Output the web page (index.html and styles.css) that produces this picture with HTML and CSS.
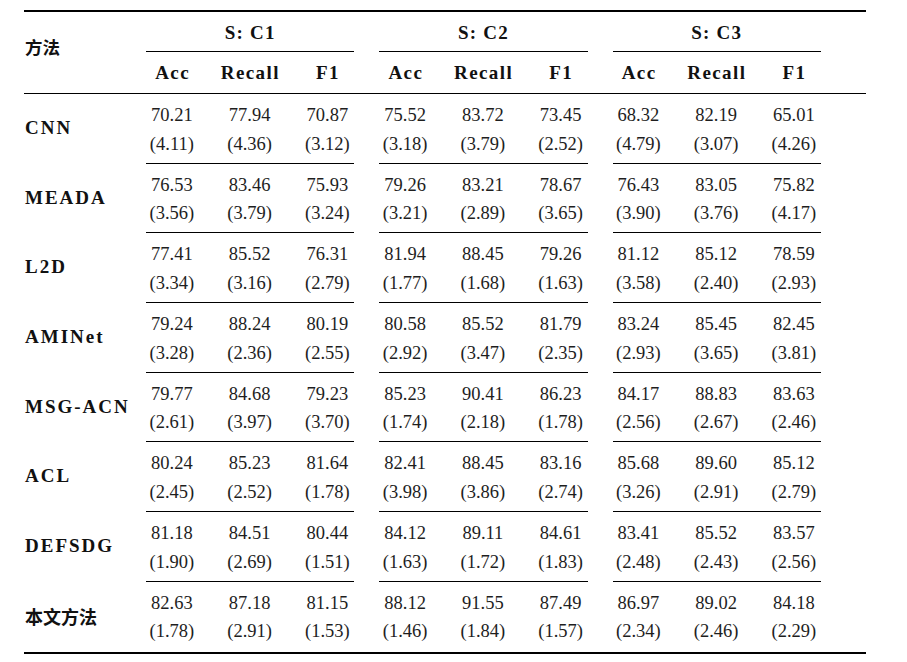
FILE: index.html
```html
<!DOCTYPE html>
<html lang="zh">
<head>
<meta charset="utf-8">
<title>方法对比表</title>
<link rel="stylesheet" href="styles.css">
</head>
<body>
<div class="tbl">
  <div class="rule thick"></div>
  <div class="head">
    <div class="method-head">方法</div>
    <div class="group g1">S: C1</div>
    <div class="group g2">S: C2</div>
    <div class="group g3">S: C3</div>
    <span class="seg g1"></span>
    <span class="seg g2"></span>
    <span class="seg g3"></span>
    <div class="sub">Acc</div><div class="sub">Recall</div><div class="sub">F1</div>
    <div class="sub">Acc</div><div class="sub">Recall</div><div class="sub">F1</div>
    <div class="sub">Acc</div><div class="sub">Recall</div><div class="sub">F1</div>
  </div>
  <div class="rule thin"></div>

  <div class="row">
    <div class="name">CNN</div>
    <div class="val"><span>70.21</span><span>(4.11)</span></div>
    <div class="val"><span>77.94</span><span>(4.36)</span></div>
    <div class="val"><span>70.87</span><span>(3.12)</span></div>
    <div class="val"><span>75.52</span><span>(3.18)</span></div>
    <div class="val"><span>83.72</span><span>(3.79)</span></div>
    <div class="val"><span>73.45</span><span>(2.52)</span></div>
    <div class="val"><span>68.32</span><span>(4.79)</span></div>
    <div class="val"><span>82.19</span><span>(3.07)</span></div>
    <div class="val"><span>65.01</span><span>(4.26)</span></div>
  </div>
  <div class="cmid"><span class="seg g1"></span><span class="seg g2"></span><span class="seg g3"></span></div>

  <div class="row">
    <div class="name">MEADA</div>
    <div class="val"><span>76.53</span><span>(3.56)</span></div>
    <div class="val"><span>83.46</span><span>(3.79)</span></div>
    <div class="val"><span>75.93</span><span>(3.24)</span></div>
    <div class="val"><span>79.26</span><span>(3.21)</span></div>
    <div class="val"><span>83.21</span><span>(2.89)</span></div>
    <div class="val"><span>78.67</span><span>(3.65)</span></div>
    <div class="val"><span>76.43</span><span>(3.90)</span></div>
    <div class="val"><span>83.05</span><span>(3.76)</span></div>
    <div class="val"><span>75.82</span><span>(4.17)</span></div>
  </div>
  <div class="cmid"><span class="seg g1"></span><span class="seg g2"></span><span class="seg g3"></span></div>

  <div class="row">
    <div class="name">L2D</div>
    <div class="val"><span>77.41</span><span>(3.34)</span></div>
    <div class="val"><span>85.52</span><span>(3.16)</span></div>
    <div class="val"><span>76.31</span><span>(2.79)</span></div>
    <div class="val"><span>81.94</span><span>(1.77)</span></div>
    <div class="val"><span>88.45</span><span>(1.68)</span></div>
    <div class="val"><span>79.26</span><span>(1.63)</span></div>
    <div class="val"><span>81.12</span><span>(3.58)</span></div>
    <div class="val"><span>85.12</span><span>(2.40)</span></div>
    <div class="val"><span>78.59</span><span>(2.93)</span></div>
  </div>
  <div class="cmid"><span class="seg g1"></span><span class="seg g2"></span><span class="seg g3"></span></div>

  <div class="row">
    <div class="name">AMINet</div>
    <div class="val"><span>79.24</span><span>(3.28)</span></div>
    <div class="val"><span>88.24</span><span>(2.36)</span></div>
    <div class="val"><span>80.19</span><span>(2.55)</span></div>
    <div class="val"><span>80.58</span><span>(2.92)</span></div>
    <div class="val"><span>85.52</span><span>(3.47)</span></div>
    <div class="val"><span>81.79</span><span>(2.35)</span></div>
    <div class="val"><span>83.24</span><span>(2.93)</span></div>
    <div class="val"><span>85.45</span><span>(3.65)</span></div>
    <div class="val"><span>82.45</span><span>(3.81)</span></div>
  </div>
  <div class="cmid"><span class="seg g1"></span><span class="seg g2"></span><span class="seg g3"></span></div>

  <div class="row">
    <div class="name">MSG-ACN</div>
    <div class="val"><span>79.77</span><span>(2.61)</span></div>
    <div class="val"><span>84.68</span><span>(3.97)</span></div>
    <div class="val"><span>79.23</span><span>(3.70)</span></div>
    <div class="val"><span>85.23</span><span>(1.74)</span></div>
    <div class="val"><span>90.41</span><span>(2.18)</span></div>
    <div class="val"><span>86.23</span><span>(1.78)</span></div>
    <div class="val"><span>84.17</span><span>(2.56)</span></div>
    <div class="val"><span>88.83</span><span>(2.67)</span></div>
    <div class="val"><span>83.63</span><span>(2.46)</span></div>
  </div>
  <div class="cmid"><span class="seg g1"></span><span class="seg g2"></span><span class="seg g3"></span></div>

  <div class="row">
    <div class="name">ACL</div>
    <div class="val"><span>80.24</span><span>(2.45)</span></div>
    <div class="val"><span>85.23</span><span>(2.52)</span></div>
    <div class="val"><span>81.64</span><span>(1.78)</span></div>
    <div class="val"><span>82.41</span><span>(3.98)</span></div>
    <div class="val"><span>88.45</span><span>(3.86)</span></div>
    <div class="val"><span>83.16</span><span>(2.74)</span></div>
    <div class="val"><span>85.68</span><span>(3.26)</span></div>
    <div class="val"><span>89.60</span><span>(2.91)</span></div>
    <div class="val"><span>85.12</span><span>(2.79)</span></div>
  </div>
  <div class="cmid"><span class="seg g1"></span><span class="seg g2"></span><span class="seg g3"></span></div>

  <div class="row">
    <div class="name">DEFSDG</div>
    <div class="val"><span>81.18</span><span>(1.90)</span></div>
    <div class="val"><span>84.51</span><span>(2.69)</span></div>
    <div class="val"><span>80.44</span><span>(1.51)</span></div>
    <div class="val"><span>84.12</span><span>(1.63)</span></div>
    <div class="val"><span>89.11</span><span>(1.72)</span></div>
    <div class="val"><span>84.61</span><span>(1.83)</span></div>
    <div class="val"><span>83.41</span><span>(2.48)</span></div>
    <div class="val"><span>85.52</span><span>(2.43)</span></div>
    <div class="val"><span>83.57</span><span>(2.56)</span></div>
  </div>
  <div class="cmid"><span class="seg g1"></span><span class="seg g2"></span><span class="seg g3"></span></div>

  <div class="row last">
    <div class="name cjk">本文方法</div>
    <div class="val"><span>82.63</span><span>(1.78)</span></div>
    <div class="val"><span>87.18</span><span>(2.91)</span></div>
    <div class="val"><span>81.15</span><span>(1.53)</span></div>
    <div class="val"><span>88.12</span><span>(1.46)</span></div>
    <div class="val"><span>91.55</span><span>(1.84)</span></div>
    <div class="val"><span>87.49</span><span>(1.57)</span></div>
    <div class="val"><span>86.97</span><span>(2.34)</span></div>
    <div class="val"><span>89.02</span><span>(2.46)</span></div>
    <div class="val"><span>84.18</span><span>(2.29)</span></div>
  </div>
  <div class="rule thick"></div>
</div>
</body>
</html>
```

FILE: styles.css
```css
html, body {
  margin: 0;
  padding: 0;
  background: #ffffff;
}

.tbl {
  --cols: 109px repeat(9, 77.75px) 1fr;
  width: 842px;
  margin: 10px 0 0 24px;
  font-family: "Liberation Serif", "Times New Roman", serif;
  color: #1e1e1e;
}

.rule {
  background: #000;
}
.rule.thick {
  height: 2px;
}
.rule.thin {
  height: 1px;
}

.head {
  display: grid;
  grid-template-columns: var(--cols);
  grid-template-rows: 39px 1px 41px;
  font-weight: 700;
  font-size: 19px;
  color: #111;
}

.method-head {
  grid-column: 1;
  grid-row: 1 / 4;
  padding: 23px 0 0 1px;
  line-height: 24px;
  font-family: "Noto Sans CJK SC", sans-serif;
  font-size: 17.5px;
  font-weight: 700;
}

.group {
  grid-row: 1;
  text-align: center;
  line-height: 24px;
  padding-top: 9px;
  letter-spacing: 1.2px;
  text-indent: 1.2px;
}
.group.g1, .seg.g1 { grid-column: 2 / 5; }
.group.g2, .seg.g2 { grid-column: 5 / 8; }
.group.g3, .seg.g3 { grid-column: 8 / 11; }

.seg {
  display: block;
  grid-row: 2;
  height: 1px;
  background: #000;
  margin: 0 12px 0 13px;
}

.sub {
  grid-row: 3;
  text-align: center;
  line-height: 24px;
  padding-top: 9px;
  letter-spacing: 1.4px;
  text-indent: 1.4px;
}

.row {
  display: grid;
  grid-template-columns: var(--cols);
  box-sizing: border-box;
  height: 68.7px;
  padding-top: 7px;
}
.row.last {
  height: 70px;
}

.name {
  grid-column: 1;
  padding-left: 1px;
  line-height: 54px;
  font-weight: 700;
  font-size: 19px;
  letter-spacing: 2px;
  color: #111;
}
.name.cjk {
  font-family: "Noto Sans CJK SC", sans-serif;
  font-size: 18px;
  letter-spacing: 0;
}

.val {
  display: flex;
  flex-direction: column;
  align-items: center;
  font-size: 18.5px;
  line-height: 28.5px;
}

.cmid {
  display: grid;
  grid-template-columns: var(--cols);
  height: 1px;
}
.cmid .seg {
  grid-row: 1;
}
```
